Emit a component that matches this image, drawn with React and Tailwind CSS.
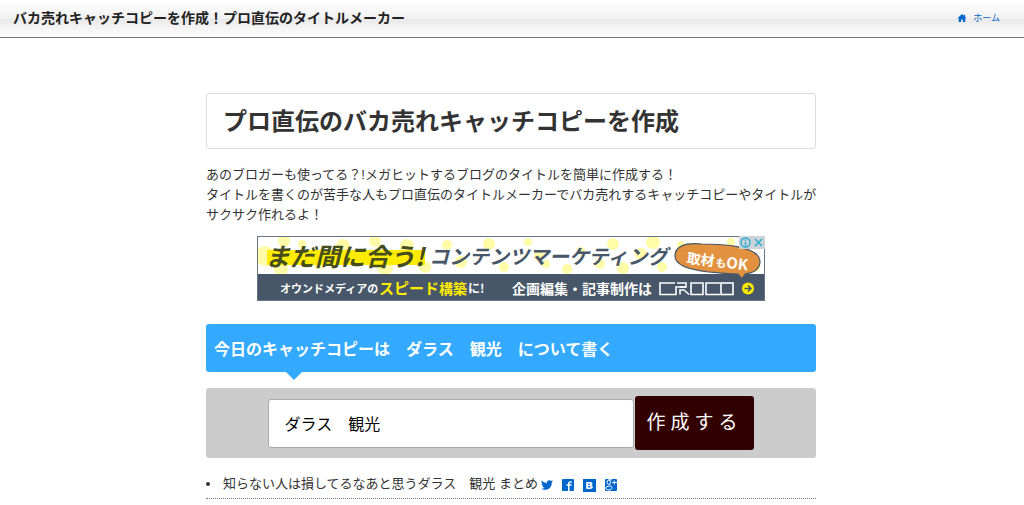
import { ImFacebook2 } from "react-icons/im";
import { FaTwitter } from "react-icons/fa";

const DOTS = [
  [8, 20, 10], [27, 5, 6], [24, 33, 7], [45, 8, 4], [62, 27, 6], [86, 10, 7], [118, 5, 6],
  [128, 31, 8], [150, 10, 7], [168, 31, 6], [190, 9, 5], [204, 26, 6], [232, 8, 6], [247, 31, 5],
  [271, 6, 4], [282, 20, 5], [289, 28, 4], [310, 33, 5], [324, 15, 4], [356, 8, 6], [343, 28, 5],
  [366, 32, 6], [384, 18, 6], [396, 6, 7], [405, 31, 5], [424, 9, 4], [474, 6, 4], [498, 31, 5],
];

function HomeIcon() {
  return (
    <svg className="size-2.5" viewBox="0 0 20 18" fill="currentColor" aria-hidden="true">
      <path d="M10 1 1 9.500h2.500V17h4.700v-5h3.600v5h4.700V9.500H19l-3-2.900V2.500h-2.500v1.800z" />
    </svg>
  );
}

function HatenaIcon() {
  return (
    <svg className="size-[13px]" viewBox="0 0 13 13" aria-hidden="true">
      <rect width="13" height="13" fill="currentColor" />
      <path
        fill="#fff"
        fillRule="evenodd"
        d="M3.200 3h3.600c1.800 0 2.700.6 2.700 1.800 0 .8-.4 1.300-1.200 1.600 1 .2 1.500.8 1.500 1.700C9.800 9.400 8.800 10 7 10H3.200zM5.200 4.500v1.300h1.100c.7 0 1-.2 1-.6s-.3-.7-1-.7zM5.200 7.100v1.400h1.300c.7 0 1.100-.2 1.100-.7s-.4-.7-1.100-.7z"
      />
    </svg>
  );
}

function GooglePlusIcon() {
  return (
    <svg className="size-3" viewBox="0 0 24 24" aria-hidden="true">
      <rect width="24" height="24" rx="2" fill="currentColor" />
      <g fill="none" stroke="#fff" strokeWidth="2">
        <ellipse cx="7.500" cy="6.500" rx="3.600" ry="4.200" />
        <path d="M7 1.500h7M10 10.500c-3 2.500 4 3 4 6.500 0 3-2.500 5-6 5-3 0-6.500-1-6.500-3.800 0-3 4-3.700 8.500-3.700" />
        <path d="M18.500 3v8M14.500 7H24" />
      </g>
    </svg>
  );
}

function AdBanner() {
  return (
    <svg
      className="block w-full max-w-[508px]"
      viewBox="0 0 508 65"
      role="img"
      aria-label="CROCO"
      fontFamily="'Noto Sans CJK JP', sans-serif"
      fontWeight="700"
    >
      <rect width="508" height="65" fill="#fff" />
      <g fill="#fffba6">
        {DOTS.map(([x, y, r]) => (
          <circle key={`${x}-${y}`} cx={x} cy={y} r={r} />
        ))}
      </g>
      <rect y="38" width="508" height="27" fill="#475769" />
      <rect x="10" y="14" width="158" height="15" fill="#ffec00" />
      <text x="8" y="30" fontSize="25" fontStyle="italic" fill="#454d1c">まだ間に合う!</text>
      <text x="172" y="28" fontSize="20" fontStyle="italic" fill="#475769">コンテンツマーケティング</text>
      <rect x="0.500" y="0.500" width="507" height="64" fill="none" stroke="#66758a" />
      <g fill="#fff">
        <text x="23" y="57" fontSize="11">オウンドメディアの</text>
        <text x="122" y="58" fontSize="15" fill="#ffec00">スピード</text>
        <text x="182" y="58" fontSize="14" fill="#ffec00">構築</text>
        <text x="211" y="57" fontSize="12">に!</text>
        <text x="255" y="58" fontSize="14">企画編集・記事制作は</text>
      </g>
      <g fill="none" stroke="#fff" strokeWidth="1.600">
        <path d="M418 47h-15v11.500h16V51h10v-4h-9" />
        <path d="M423 58.500V54h4l5 4.500M429 51h-6M434 58.500V47h12v11.500zM463 47h-14v11.500h14" />
        <rect x="464" y="47" width="12" height="11.500" />
      </g>
      <circle cx="491" cy="52.500" r="6" fill="#ffec00" />
      <path d="M487.500 52.500h6M491 49.500l3 3-3 3" fill="none" stroke="#475769" strokeWidth="1.600" />
      <path
        d="M418 20c0-9 9-14 27-12 20 0 57 2 58 17 0 9-6 12-15 13l-3 5-4-5c-9 0-18-1-29-2-18-2-34-6-34-16z"
        fill="#e2923e"
        stroke="#475769"
        strokeWidth="1.200"
      />
      <g fill="#fff" transform="rotate(7 430 28)">
        <text x="429" y="27" fontSize="14">取材</text>
        <text x="458" y="27" fontSize="11">も</text>
        <text x="469" y="27" fontSize="15">OK</text>
      </g>
      <rect x="482" y="0" width="26" height="13" fill="#cbd2d8" />
      <g fill="none" stroke="#25aed0" strokeWidth="1.400">
        <circle cx="488.500" cy="6.500" r="4.500" />
        <path d="M488.500 3.500v1.200M488.500 5.800v3.700M498 3l7 7M505 3l-7 7" />
      </g>
    </svg>
  );
}

export default function App() {
  return (
    <div className="min-h-screen bg-white text-[13px] leading-5 text-[#333] font-['Liberation_Sans','Noto_Sans_CJK_JP',sans-serif]">
      <header className="flex h-[38px] items-center justify-between border-b border-[#777] bg-[linear-gradient(#fff_0%,#f2f2f2_48%,#e9e9e9_52%,#fff_100%)] pr-6 pl-[13px]">
        <div className="pb-0.5 text-[14px] font-bold text-[#222]">
          バカ売れキャッチコピーを作成！プロ直伝のタイトルメーカー
        </div>
        <nav>
          <a href="#home" className="flex items-center gap-1.5 pb-0.5 text-[9px] text-[#0066cc]">
            <HomeIcon />
            ホーム
          </a>
        </nav>
      </header>

      <main className="pt-[55px] pr-0.5">
        <div className="mx-auto w-full max-w-[610px]">
          <h1 className="rounded-[3px] border border-[#ddd] px-4 pt-2.5 pb-2 text-[24px] leading-9 font-bold">
            プロ直伝のバカ売れキャッチコピーを作成
          </h1>
          <p className="-mr-1 mt-4">
            あのブロガーも使ってる？!メガヒットするブログのタイトルを簡単に作成する！
            <br />
            タイトルを書くのが苦手な人もプロ直伝のタイトルメーカーでバカ売れするキャッチコピーやタイトルがサクサク作れるよ！
          </p>

          <div className="mt-[11px] flex justify-center">
            <AdBanner />
          </div>

          <h2 className="relative mt-[23px] rounded-[3px] bg-[#33aaff] px-2 pt-3.5 pb-2.5 text-[16px] leading-6 font-bold text-white">
            今日のキャッチコピーは　ダラス　観光　について書く
            <span className="absolute top-full left-20 border-x-8 border-t-8 border-x-transparent border-t-[#33aaff]" />
          </h2>

          <form
            className="mt-4 flex items-center justify-center gap-px rounded-[3px] bg-[#cccccc] py-2"
            onSubmit={(event) => event.preventDefault()}
          >
            <input
              type="text"
              aria-label="キーワード"
              defaultValue="ダラス　観光"
              className="h-[49px] w-3/5 rounded-[3px] border border-[#aaa] bg-white px-[15px] text-[16px] text-black"
            />
            <button
              type="submit"
              className="h-[54px] rounded-[3px] bg-[#330000] px-[11px] text-[19px] tracking-[5px] text-white"
            >
              作成する
            </button>
          </form>

          <ul className="mt-4">
            <li className="flex items-center border-b border-dotted border-[#777] pb-1">
              <span className="mr-[13px] size-1 rounded-full bg-[#333]" />
              <span>知らない人は損してるなあと思うダラス　観光 まとめ</span>
              <span className="ml-[3px] flex items-center gap-[9px] pt-0.5 text-[12px] text-[#0066cc]">
                <a href="#twitter" aria-label="Twitter"><FaTwitter /></a>
                <a href="#facebook" aria-label="Facebook"><ImFacebook2 /></a>
                <a href="#hatena" aria-label="はてなブックマーク"><HatenaIcon /></a>
                <a href="#google-plus" aria-label="Google+"><GooglePlusIcon /></a>
              </span>
            </li>
          </ul>
        </div>
      </main>
    </div>
  );
}
